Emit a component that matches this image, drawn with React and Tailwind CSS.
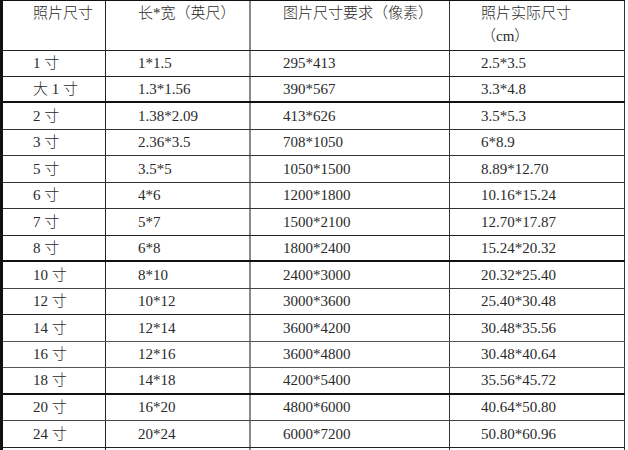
import React from 'react';

const rows = [
  ['1 寸', '1*1.5', '295*413', '2.5*3.5', 'h-[26px]', 'border-[#222]'],
  ['大 1 寸', '1.3*1.56', '390*567', '3.3*4.8', 'h-[26px]', 'border-[#111] border-b-2'],
  ['2 寸', '1.38*2.09', '413*626', '3.5*5.3', 'h-[27px]', 'border-[#333]'],
  ['3 寸', '2.36*3.5', '708*1050', '6*8.9', 'h-[26px]', 'border-[#333]'],
  ['5 寸', '3.5*5', '1050*1500', '8.89*12.70', 'h-[27px]', 'border-[#333]'],
  ['6 寸', '4*6', '1200*1800', '10.16*15.24', 'h-[26px]', 'border-[#333]'],
  ['7 寸', '5*7', '1500*2100', '12.70*17.87', 'h-[27px]', 'border-[#222]'],
  ['8 寸', '6*8', '1800*2400', '15.24*20.32', 'h-[26px]', 'border-[#111] border-b-2'],
  ['10 寸', '8*10', '2400*3000', '20.32*25.40', 'h-[27px]', 'border-[#444]'],
  ['12 寸', '10*12', '3000*3600', '25.40*30.48', 'h-[26px]', 'border-[#222]'],
  ['14 寸', '12*14', '3600*4200', '30.48*35.56', 'h-[27px]', 'border-[#555]'],
  ['16 寸', '12*16', '3600*4800', '30.48*40.64', 'h-[26px]', 'border-[#555]'],
  ['18 寸', '14*18', '4200*5400', '35.56*45.72', 'h-[27px]', 'border-[#111] border-b-2'],
  ['20 寸', '16*20', '4800*6000', '40.64*50.80', 'h-[26px]', 'border-[#444]'],
  ['24 寸', '20*24', '6000*7200', '50.80*60.96', 'h-[27px]', 'border-[#222]'],
  ['30 寸', '24*30', '7200*9000', '60.96*76.20', 'h-[27px]', 'border-[#222]'],
];

const font = { fontFamily: '"Liberation Serif", "Noto Sans CJK SC", serif' };

const Row = ({ cells, height, border }) => (
  <div className={`flex ${height} border-b ${border}`}>
    <div className="w-[103px] border-r border-[#222] pl-[30px] flex items-center">{cells[0]}</div>
    <div className="w-[145px] border-r-2 border-[#8a8a8a] pl-[32px] flex items-center">{cells[1]}</div>
    <div className="w-[199px] border-r border-[#333] pl-[32px] flex items-center">{cells[2]}</div>
    <div className="w-[175px] border-r border-[#333] pl-[31px] flex items-center">{cells[3]}</div>
  </div>
);

export default function App() {
  return (
    <div className="w-[628px] h-[450px] overflow-hidden bg-white text-[#2a2a2a] text-[15px] font-light" style={font}>
      <div className="w-[625px] border-l-[3px] border-t border-[#111]">
        <div className="flex h-[50px] border-b border-[#222] leading-[23px]">
          <div className="w-[103px] border-r border-[#222] pl-[30px] pt-[1px]">照片尺寸</div>
          <div className="w-[145px] border-r-2 border-[#8a8a8a] pl-[32px] pt-[1px]">长*宽（英尺）</div>
          <div className="w-[199px] border-r border-[#333] pl-[32px] pt-[1px]">图片尺寸要求（像素）</div>
          <div className="w-[175px] border-r border-[#333] pl-[31px] pt-[1px]">
            照片实际尺寸
            <br />
            （cm）
          </div>
        </div>
        {rows.map((r, i) => (
          <Row key={i} cells={r} height={r[4]} border={r[5]} />
        ))}
      </div>
    </div>
  );
}
